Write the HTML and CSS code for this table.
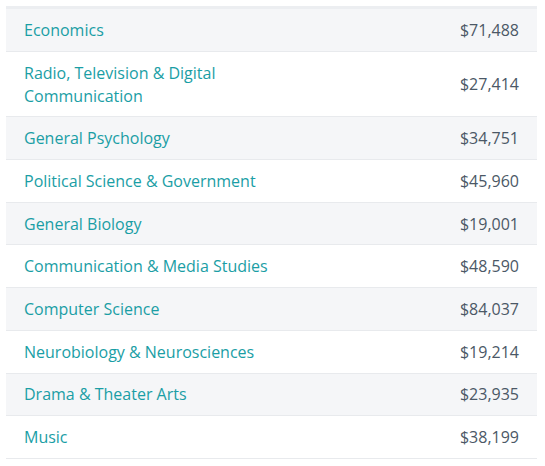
FILE: index.html
```html
<!DOCTYPE html>
<html>
<head>
<meta charset="utf-8">
<link rel="stylesheet" href="styles.css">
</head>
<body>
<div class="wrap">
<table class="majors">
<tbody>
<tr><td class="name">Economics</td><td class="val">$71,488</td></tr>
<tr><td class="name">Radio, Television &amp; Digital<br>Communication</td><td class="val">$27,414</td></tr>
<tr><td class="name">General Psychology</td><td class="val">$34,751</td></tr>
<tr><td class="name">Political Science &amp; Government</td><td class="val">$45,960</td></tr>
<tr><td class="name">General Biology</td><td class="val">$19,001</td></tr>
<tr><td class="name">Communication &amp; Media Studies</td><td class="val">$48,590</td></tr>
<tr><td class="name">Computer Science</td><td class="val">$84,037</td></tr>
<tr><td class="name">Neurobiology &amp; Neurosciences</td><td class="val">$19,214</td></tr>
<tr><td class="name">Drama &amp; Theater Arts</td><td class="val">$23,935</td></tr>
<tr><td class="name">Music</td><td class="val">$38,199</td></tr>
</tbody>
</table>
</div>
</body>
</html>
```
FILE: styles.css
```css
html, body { margin: 0; padding: 0; background: #fff; }
body { font-family: "Open Sans", "Noto Sans", sans-serif; font-size: 16px; }
.wrap { padding: 6px 8px 0 6px; }
.majors {
  width: 100%;
  border-collapse: collapse;
  border-top: 3px solid #eceef1;
}
.majors td {
  padding: 9.85px 18px 8.85px;
  line-height: 23px;
  border-bottom: 1px solid #e8eaed;
  vertical-align: middle;
}
.majors tr:nth-child(odd) td { background: #f5f6f8; }
.name { color: #1a9ea5; text-align: left; }
.val { color: #4b5866; text-align: right; }
```
